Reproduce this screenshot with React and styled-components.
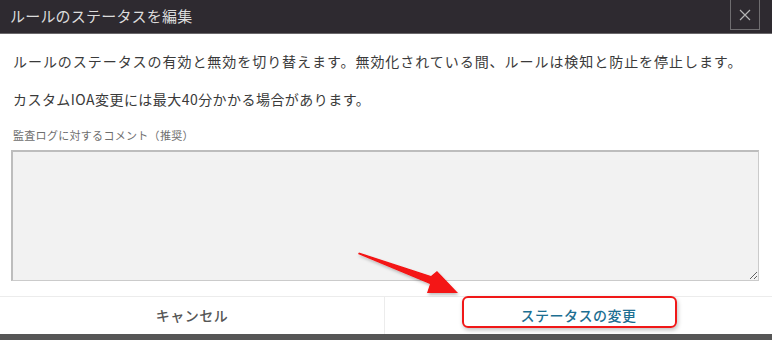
import React from 'react';
import styled, { createGlobalStyle } from 'styled-components';

const GlobalStyle = createGlobalStyle`
  html, body {
    margin: 0;
    padding: 0;
    background: #fff;
  }
  body {
    font-family: "Noto Sans CJK JP", "Noto Sans", sans-serif;
  }
`;

const Dialog = styled.div`
  position: relative;
  width: 772px;
  height: 340px;
  display: flex;
  flex-direction: column;
  background: #fff;
  overflow: hidden;
`;

const Header = styled.div`
  height: 33px;
  flex: none;
  display: flex;
  align-items: flex-start;
  justify-content: space-between;
  background: #2e2a30;
  border-bottom: 1px solid #6a686b;
  padding-left: 10px;
  padding-right: 12px;
`;

const Title = styled.h1`
  margin: 0;
  padding-top: 5px;
  font-size: 15px;
  font-weight: 400;
  color: #dcdcdc;
  letter-spacing: 0.2px;
  line-height: 22px;
`;

const CloseButton = styled.button`
  width: 30px;
  height: 30px;
  margin: 0;
  padding: 0;
  background: transparent;
  border: 1px solid #6f6d70;
  border-top: none;
  display: flex;
  align-items: center;
  justify-content: center;
  cursor: pointer;
`;

const Body = styled.div`
  flex: 1;
  display: flex;
  flex-direction: column;
  padding: 0 13px 0 11px;
`;

const Paragraph = styled.p`
  margin: 0;
  padding-left: 2px;
  font-size: 14px;
  line-height: 20px;
  letter-spacing: ${p => p.$spacing}px;
  color: #3a3a3a;
  margin-top: ${p => p.$top}px;
`;

const Label = styled.label`
  display: block;
  margin-top: 19px;
  padding-left: 2px;
  font-size: 11px;
  line-height: 14px;
  letter-spacing: 0.3px;
  color: #6e6e6e;
`;

const Comment = styled.textarea`
  margin-top: 8px;
  height: 131px;
  width: 100%;
  box-sizing: border-box;
  background: #f2f2f2;
  border: 2px solid #cbcbcb;
  border-right-width: 1px;
  border-bottom-width: 1px;
  border-top-color: #bdbdbd;
  border-left-color: #bdbdbd;
  resize: both;
  font-family: inherit;
  font-size: 13px;
  outline: none;
`;

const Footer = styled.div`
  flex: none;
  height: 37px;
  display: grid;
  grid-template-columns: 384px 1fr;
  border-top: 1px solid #ececec;
  border-bottom: 6px solid #565656;
`;

const FooterButton = styled.button`
  background: #fff;
  border: none;
  border-left: ${p => (p.$divided ? '1px solid #ececec' : 'none')};
  font-family: inherit;
  font-size: 14px;
  font-weight: 500;
  letter-spacing: 0.5px;
  color: ${p => (p.$primary ? '#1d6f92' : '#555')};
  display: flex;
  align-items: center;
  justify-content: center;
  padding: 0 0 2px;
  cursor: pointer;
`;

const Highlight = styled.div`
  position: absolute;
  left: 462px;
  top: 296px;
  width: 215px;
  height: 32px;
  box-sizing: border-box;
  border: 2px solid #f01818;
  border-radius: 6px;
  box-shadow: 1px 2px 4px rgba(0, 0, 0, 0.25);
  pointer-events: none;
`;

const ArrowLayer = styled.svg`
  position: absolute;
  left: 0;
  top: 0;
  pointer-events: none;
`;

export default function App() {
  return (
    <>
      <GlobalStyle />
      <Dialog>
        <Header>
          <Title>ルールのステータスを編集</Title>
          <CloseButton aria-label="閉じる">
            <svg width="12" height="12" viewBox="0 0 12 12">
              <path d="M1 1 L11 11 M11 1 L1 11" stroke="#b4b4b4" strokeWidth="1.2" fill="none" />
            </svg>
          </CloseButton>
        </Header>
        <Body>
          <Paragraph $top={17} $spacing={0.95}>
            ルールのステータスの有効と無効を切り替えます。無効化されている間、ルールは検知と防止を停止します。
          </Paragraph>
          <Paragraph $top={18} $spacing={0.45}>カスタムIOA変更には最大40分かかる場合があります。</Paragraph>
          <Label>監査ログに対するコメント（推奨）</Label>
          <Comment />
        </Body>
        <Footer>
          <FooterButton>キャンセル</FooterButton>
          <FooterButton $divided $primary>ステータスの変更</FooterButton>
        </Footer>
        <Highlight />
        <ArrowLayer width="772" height="340" viewBox="0 0 772 340">
          <defs>
            <filter id="sh" x="-10%" y="-10%" width="130%" height="140%">
              <feDropShadow dx="1" dy="2" stdDeviation="1.5" floodColor="#000" floodOpacity="0.25" />
            </filter>
          </defs>
          <polygon
            points="359,252.5 431,276 437,271 458,293 427,293 430,284 358,254"
            fill="#f41212"
            filter="url(#sh)"
          />
        </ArrowLayer>
      </Dialog>
    </>
  );
}
